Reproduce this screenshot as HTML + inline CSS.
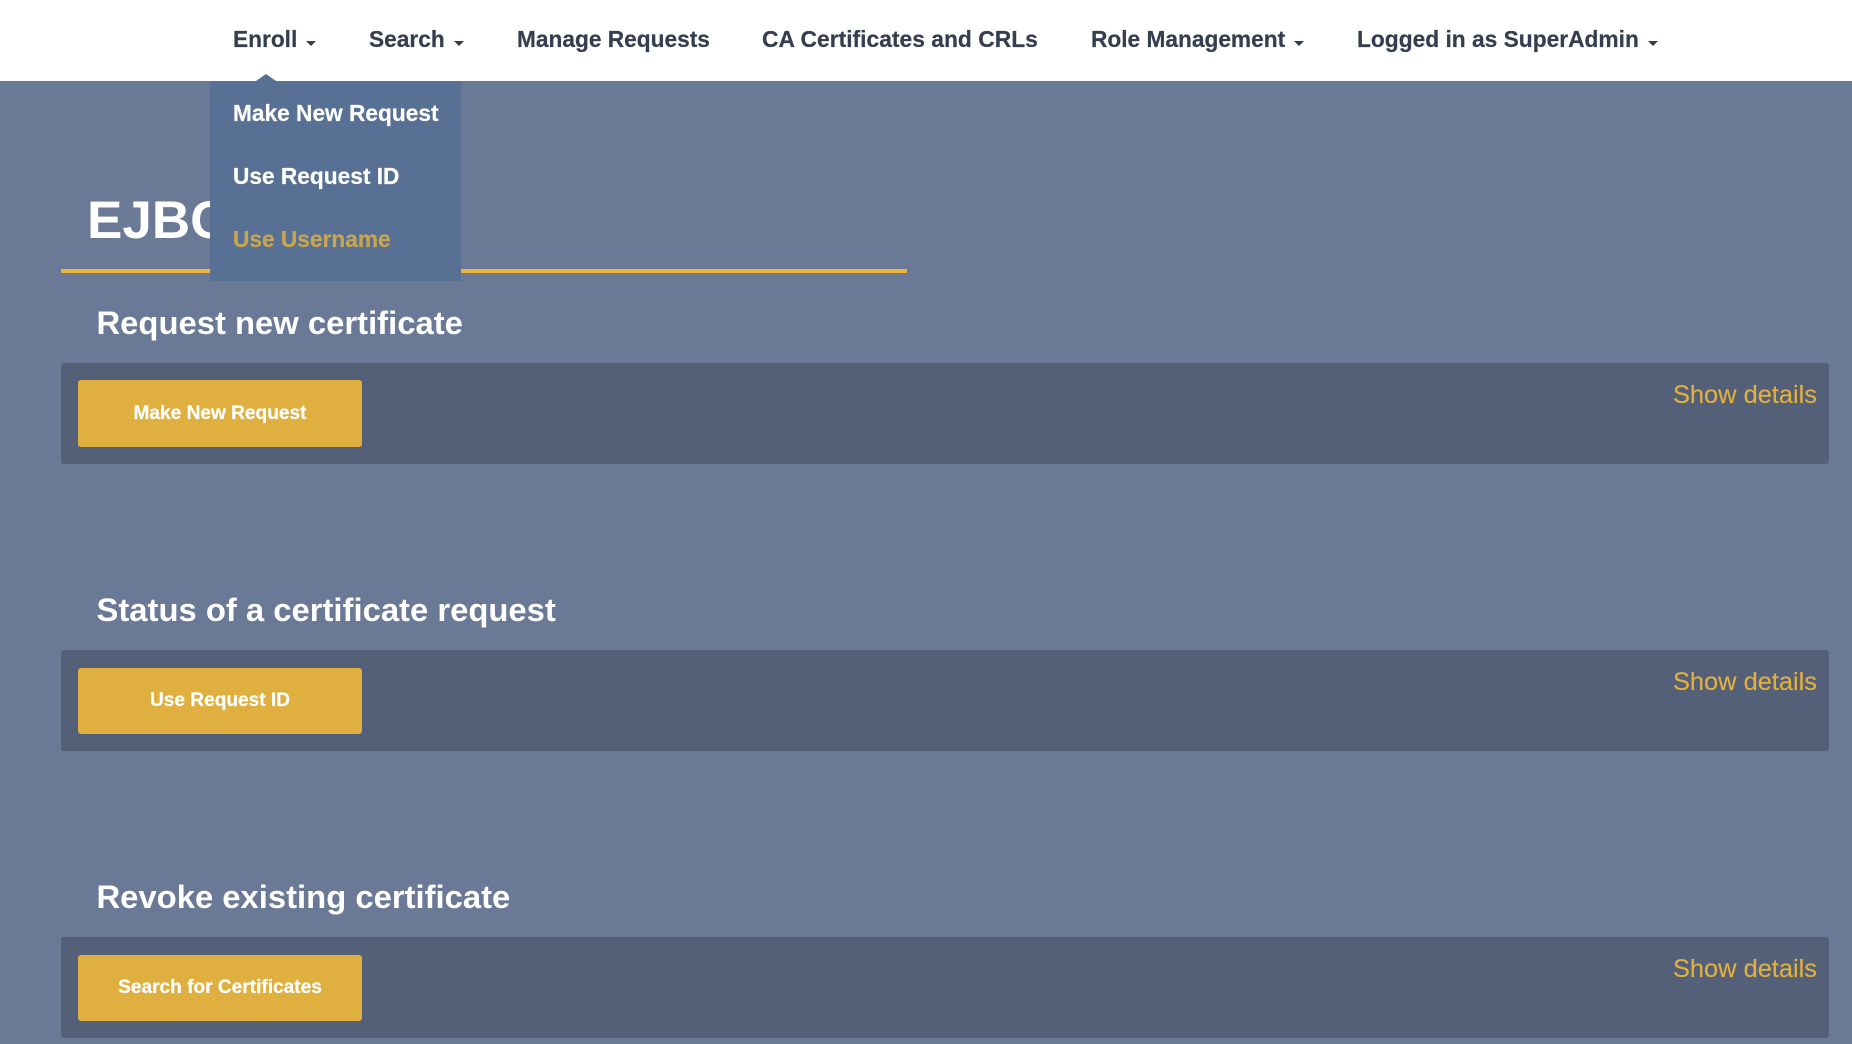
<!DOCTYPE html>
<html lang="en">
<head>
<meta charset="utf-8">
<title>EJBCA RA</title>
<style>
html,body{margin:0;padding:0;width:1852px;height:1044px;overflow:hidden;background:#697996;font-family:"Liberation Sans",Arial,sans-serif}
.a{position:absolute;white-space:nowrap;display:block}
#nav{position:absolute;left:0;top:0;width:1852px;height:81px;background:#fff}
.n{font-weight:700;font-size:22.7px;line-height:30px;top:24px;color:#343e4f;text-decoration:none;-webkit-text-stroke:.2px #343e4f}
.c{position:absolute;top:41px;width:0;height:0;border-left:5px solid transparent;border-right:5px solid transparent;border-top:5px solid #343e4f}
#dd{position:absolute;left:210px;top:81px;width:251px;height:200px;background:#577093}
#ar{position:absolute;left:256px;top:74px;width:0;height:0;border-left:10px solid transparent;border-right:10px solid transparent;border-bottom:7px solid #577093}
.m{font-weight:700;font-size:22.7px;line-height:30px;color:#fff;left:233px;text-decoration:none;-webkit-text-stroke:.2px currentColor}
#t{left:87px;top:191px;font-size:53px;line-height:60px;font-weight:700;color:#fff}
#l{position:absolute;left:61px;top:269px;width:846px;height:4px;background:#f0b43a}
.h{left:96.5px;font-size:32.8px;line-height:40px;font-weight:700;color:#fff}
.p{position:absolute;left:61px;width:1768px;height:101px;background:#545f78;border-radius:3px}
.b{position:absolute;left:78px;width:284px;height:66px;line-height:65px;background:#dfb03f;border-radius:3px;color:#fff;font-size:19.1px;font-weight:700;text-align:center;text-decoration:none;-webkit-text-stroke:.2px #fff}
.s{left:1673px;font-size:25.4px;line-height:30px;color:#e0b040;text-decoration:none;-webkit-text-stroke:.15px #e0b040}
</style>
</head>
<body>
<div id="nav"></div>
<a class="a n" style="left:233px">Enroll</a><i class="c" style="left:306px"></i>
<a class="a n" style="left:369px">Search</a><i class="c" style="left:454px"></i>
<a class="a n" style="left:517px">Manage Requests</a>
<a class="a n" style="left:762px;font-size:22.85px">CA Certificates and CRLs</a>
<a class="a n" style="left:1091px">Role Management</a><i class="c" style="left:1294px"></i>
<a class="a n" style="left:1357px;font-size:22.75px">Logged in as SuperAdmin</a><i class="c" style="left:1648px"></i>

<div id="t" class="a">EJBCA</div>
<div id="l"></div>

<div class="a h" style="top:303px">Request new certificate</div>
<div class="p" style="top:363px"></div>
<a class="b" style="top:380px;height:67px;line-height:67px">Make New Request</a>
<a class="a s" style="top:380px">Show details</a>

<div class="a h" style="top:590px">Status of a certificate request</div>
<div class="p" style="top:650px"></div>
<a class="b" style="top:668px">Use Request ID</a>
<a class="a s" style="top:667px">Show details</a>

<div class="a h" style="top:877px">Revoke existing certificate</div>
<div class="p" style="top:937px"></div>
<a class="b" style="top:955px">Search for Certificates</a>
<a class="a s" style="top:954px">Show details</a>

<div id="dd"></div>
<div id="ar"></div>
<a class="a m" style="top:98px">Make New Request</a>
<a class="a m" style="top:161px">Use Request ID</a>
<a class="a m" style="top:224px;color:#c8a54f">Use Username</a>
</body>
</html>
